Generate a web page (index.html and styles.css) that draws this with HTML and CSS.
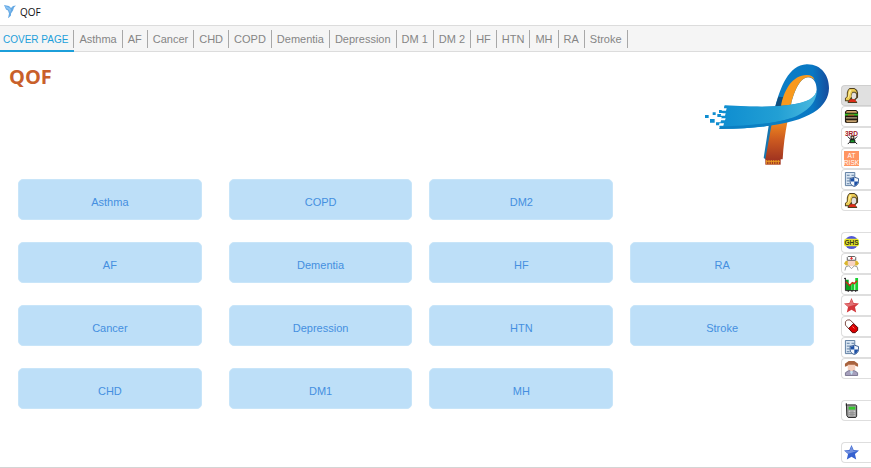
FILE: index.html
```html
<!DOCTYPE html>
<html lang="en">
<head>
    <meta charset="UTF-8">
    <title>QOF</title>
    <meta name="viewport" content="width=device-width, initial-scale=1.0">
    <link rel="stylesheet" href="styles.css">
</head>
<body>
    <!-- shared icons -->
    <svg class="icon-defs" aria-hidden="true">
        <symbol id="icon-patient" viewBox="0 0 16 16">
            <path fill="#4f4020" d="M6 0h5l3 2 1 3v5l-2 2-1 1 2 2v1H4v-2H1v-3l2-2V5l1-3z"/>
            <path fill="#eccb55" d="M6 1h5l2 2 1 3-2-2H9L8 6v3l-2 3-1 1H2v-2l2-2V5l1-3z"/>
            <path fill="#fff0a0" d="M6 2h2L6 7l-1 3-1 1 1-5z"/>
            <path fill="#e4e0dc" d="M9 5h3l1 2v3l-2 2H9L8 9z"/>
            <path fill="#dc2c18" d="M7 12h4l2 2v1H5v-1z"/>
        </symbol>
        <symbol id="icon-record" viewBox="0 0 16 16">
            <path fill="#d9e5f2" stroke="#5b7b9f" d="M1.500 .5h10v14h-10z"/>
            <path stroke="#5b7b9f" d="M3 3.500h3M3 6.500h5M3 9.500h3M3 12.500h3M8 3.500h3"/>
            <path fill="#f4f8fc" stroke="#34588c" d="M11 5.500l4.500 1.500v3c0 3-2 4.500-4.500 5.500-2.500-1-4.500-2.500-4.500-5.500V7z"/>
            <path fill="#1d50a5" d="M11 6v4H7V7.300zM11 10h4c0 2.500-1.500 4-4 5z"/>
        </symbol>
        <symbol id="icon-star" viewBox="0 0 16 16">
            <path d="M8 0l2.300 5.300 5.700.5-4.300 3.900L13 15.500l-5-3-5 3 1.300-5.800L0 5.800l5.700-.5z"/>
            <path fill="#fff" opacity=".3" d="M8 1l2 5 4 .4L2 10l2.500-1L1 6.400 6 6z"/>
        </symbol>
    </svg>

    <header class="title-bar">
        <svg class="app-icon" viewBox="0 0 12 13" aria-hidden="true">
            <path fill="#65a9e4" d="M0 0l5 1 2 2 2-2 3-.5-2 2-1 3-2 3v2l-3 3 1-5-1-3-2-1z"/>
            <path fill="#8cc4f4" d="M1 1l5 2 1 2-1 3-1-3-3-2z"/>
        </svg>
        <span>QOF</span>
    </header>

    <nav class="tabs">
        <a class="tab active" href="#cover">COVER PAGE</a>
        <a class="tab" href="#asthma">Asthma</a>
        <a class="tab" href="#af">AF</a>
        <a class="tab" href="#cancer">Cancer</a>
        <a class="tab" href="#chd">CHD</a>
        <a class="tab" href="#copd">COPD</a>
        <a class="tab" href="#dementia">Dementia</a>
        <a class="tab" href="#depression">Depression</a>
        <a class="tab" href="#dm1">DM 1</a>
        <a class="tab" href="#dm2">DM 2</a>
        <a class="tab" href="#hf">HF</a>
        <a class="tab" href="#htn">HTN</a>
        <a class="tab" href="#mh">MH</a>
        <a class="tab" href="#ra">RA</a>
        <a class="tab" href="#stroke">Stroke</a>
    </nav>

    <div class="page">
        <main class="cover" id="cover">
            <div class="cover-header">
                <h1>QOF</h1>
                <svg class="logo" viewBox="30 20 402 318" aria-hidden="true">
                    <defs>
                        <linearGradient id="loop" x1="0" y1="0" x2="1" y2="0">
                            <stop offset="0" stop-color="#1696d6"/>
                            <stop offset=".5" stop-color="#0c7fc6"/>
                            <stop offset=".85" stop-color="#0878c4"/>
                            <stop offset="1" stop-color="#174b9c"/>
                        </linearGradient>
                        <linearGradient id="arm" x1="0" y1="0" x2="1" y2="0">
                            <stop offset="0" stop-color="#0e8dd0"/>
                            <stop offset=".6" stop-color="#229fd4"/>
                            <stop offset="1" stop-color="#4ab9df"/>
                        </linearGradient>
                        <linearGradient id="leg" x1="0" y1="0" x2="0" y2="1">
                            <stop offset="0" stop-color="#f28c1e"/>
                            <stop offset=".5" stop-color="#cc5a20"/>
                            <stop offset="1" stop-color="#a23520"/>
                        </linearGradient>
                    </defs>
                    <path fill="#1775ae" d="M237 205h24l-32 108-8-5z"/>
                    <path fill="url(#leg)" d="M246 200l47-5c-8 40-13 78-15 117h-52z"/>
                    <path fill="#a23520" d="M226 311h46v17h-46z"/>
                    <path stroke="#e89a24" stroke-width="3" d="M230 314v13M237 314v13M244 314v13M251 314v13M258 314v13M265 314v13M228 318h42"/>
                    <path fill="url(#loop)" fill-rule="evenodd" d="M256 153C272 95 295 30 350 27c45-1 67 35 67 72-2 70-85 120-329 122l16-71c70 4 110 5 152 3zM303 148c48-6 76-20 77-45 0-22-10-36-26-37-24 1-42 42-51 82z"/>
                    <path fill="#124e7d" d="M256 153l9-29 17 2-7 27z"/>
                    <path fill="#f8991d" d="M273 151c9-48 35-92 77-92 13 0 21 5 24 15-7-7-13-9-20-8-24 1-42 42-51 82z"/>
                    <path fill="url(#arm)" d="M104 151c90 5 158 5 205-4 40-6 67-19 71-42 2 43-44 79-105 91-53 12-124 18-187 19z"/>
                    <path fill="#0b7fc2" d="M90 214c98-3 170-11 218-27-48 24-100 33-220 34z"/>
                    <g fill="#0e8dd0">
                        <path d="M45 179h11v9H45zM68 171h9v8h-9zM60 191h14v11H60zM82 176h14v9H82zM78 201h14v9H78zM87 164h15v9H87zM94 187h14v9H94z"/>
                    </g>
                    <g fill="#fff">
                        <path d="M97 159h13l-2 7H95zM94 174h13l-2 7H92zM91 189h16l-2 6H89zM88 204h14l-2 7H87z"/>
                    </g>
                </svg>
            </div>

            <div class="button-grid">
                <button class="condition">Asthma</button>
                <button class="condition">AF</button>
                <button class="condition">Cancer</button>
                <button class="condition">CHD</button>
                <button class="condition">COPD</button>
                <button class="condition">Dementia</button>
                <button class="condition">Depression</button>
                <button class="condition">DM1</button>
                <button class="condition">DM2</button>
                <button class="condition">HF</button>
                <button class="condition">HTN</button>
                <button class="condition">MH</button>
                <button class="condition second-row">RA</button>
                <button class="condition third-row">Stroke</button>
            </div>
        </main>

        <aside class="side-bar">
            <button class="side-btn active" aria-label="Patient"><svg><use href="#icon-patient"/></svg></button>
            <button class="side-btn" aria-label="Diet">
                <svg viewBox="0 0 16 16">
                    <path fill="#21180e" d="M3 1h10l2 2v11l-2 1H3l-2-1V3z"/>
                    <path fill="#d0a66c" d="M3 2h10l1 2H2z"/>
                    <path fill="#2fc024" d="M1 5h14v2H1z"/>
                    <path fill="#dd382c" d="M4 6h7v1H4z"/>
                    <path fill="#ead9b2" d="M2 9h12v1H2z"/>
                    <path fill="#c8a470" d="M2 12h12l-1 2H3z"/>
                </svg>
            </button>
            <button class="side-btn" aria-label="Third party">
                <svg viewBox="0 0 16 16">
                    <path stroke="#181818" fill="none" d="M4 7l3 3h4l3-3M7 12l-3 3M11 12l3 3"/>
                    <path fill="#111" d="M7 6h4v4H7z"/>
                    <path fill="#f3d9bd" d="M8 7h2v2H8z"/>
                    <path fill="#199c2b" stroke="#111" d="M6.500 10.500h5v3h-5z"/>
                    <text class="third-text" x="8" y="6">3RD</text>
                </svg>
            </button>
            <button class="side-btn" aria-label="At risk">
                <svg viewBox="0 0 16 16">
                    <path fill="#ff9561" d="M0 0h16v16H0z"/>
                    <text class="risk-text" x="8" y="7">AT</text>
                    <text class="risk-text" x="8" y="15">RISK</text>
                </svg>
            </button>
            <button class="side-btn" aria-label="Protected record"><svg><use href="#icon-record"/></svg></button>
            <button class="side-btn" aria-label="Patient details"><svg><use href="#icon-patient"/></svg></button>

            <button class="side-btn new-group" aria-label="GHS">
                <svg viewBox="0 0 16 16">
                    <circle cx="8" cy="8" r="7" fill="#5057d8"/>
                    <path fill="#e6e62a" d="M1 4h14l1 2v4l-1 2H1l-1-2V6z"/>
                    <text class="ghs-text" x="8" y="11">GHS</text>
                </svg>
            </button>
            <button class="side-btn" aria-label="Nurse">
                <svg viewBox="0 0 16 16">
                    <path fill="#d9b62e" d="M2 5h12l2 3-2 2H2L0 8z"/>
                    <path fill="#f8d3c4" d="M4 4h8v5l-3 2H7L4 9z"/>
                    <path fill="#fff" stroke="#555" d="M3.500 1.500l1-1h7l1 1v3h-9z"/>
                    <path stroke="#e52e2e" d="M8 1v3M6.500 2.500h3"/>
                    <path fill="#fff" stroke="#999" d="M1 15.500l1-4 3-1 3 3 3-3 3 1 1 4"/>
                </svg>
            </button>
            <button class="side-btn" aria-label="Chart">
                <svg viewBox="0 0 16 16">
                    <path fill="#0c9f20" d="M2 3h3v11H2zM5 8h3v6H5z"/>
                    <path fill="#18cf30" d="M8 6h3v8H8zM12 1h3v13h-3z"/>
                    <path stroke="#222" fill="none" d="M0 1.500h2M1.500 1v13.500H15M4.500 14v2M8.500 14v2M12.500 14v2"/>
                    <path stroke="#cf2a18" fill="none" stroke-width="1.500" d="M2 5l4 4 3-3 2 1 3-3"/>
                </svg>
            </button>
            <button class="side-btn" aria-label="Red star"><svg class="red-star"><use href="#icon-star"/></svg></button>
            <button class="side-btn" aria-label="Medication">
                <svg viewBox="0 0 16 16">
                    <path fill="#fff" stroke="#77443e" d="M1.500 3l2-2h3l8 8v3l-2.500 2.500H9L1.500 6.500z"/>
                    <path fill="#dc0000" stroke="#5e0e0e" d="M10 5l4.500 4v3L12 14.500H9L5 10z"/>
                    <path stroke="#ff8b80" d="M9 8l2 2"/>
                </svg>
            </button>
            <button class="side-btn" aria-label="Record audit"><svg><use href="#icon-record"/></svg></button>
            <button class="side-btn" aria-label="Carer">
                <svg viewBox="0 0 16 16">
                    <path fill="#a8623d" d="M5 0h6l4 3v3l-3-1H4L1 6V3z"/>
                    <path fill="#f5cfbd" d="M4 4h8v5l-2 2H6L4 9z"/>
                    <path fill="#a6a0bd" stroke="#77738f" d="M1.500 15.500v-3l3-2h2l1.500 2 1.500-2h2l3 2v3z"/>
                    <path fill="#c7e4f4" d="M6 11h4l-2 4z"/>
                </svg>
            </button>

            <button class="side-btn new-group" aria-label="Phone">
                <svg viewBox="0 0 16 16">
                    <path fill="#999" stroke="#222" d="M2.500.5V3l1-1h9l1 1v11l-1 1.500h-8l-1.500-2z"/>
                    <path fill="#35c92d" d="M5 4h7v3H5z"/>
                    <path fill="#ccc" d="M5 8h7v6H5z"/>
                    <path stroke="#888" d="M5 10.500h7M5 12.500h7M7.500 8v6M9.500 8v6"/>
                </svg>
            </button>

            <button class="side-btn new-group" aria-label="Blue star"><svg class="blue-star"><use href="#icon-star"/></svg></button>
        </aside>
    </div>
</body>
</html>
```
FILE: styles.css
```css
* {
    box-sizing: border-box;
}
body {
    display: flex;
    flex-direction: column;
    min-height: 100vh;
    margin: 0;
    background: #fff;
    font-family: "Liberation Sans", Arial, sans-serif;
    font-size: 11px;
}
.icon-defs {
    display: none;
}
.title-bar {
    display: flex;
    align-items: center;
    gap: 4px;
    height: 25px;
    padding: 0 4px 2px;
    color: #111;
    font-family: "Open Sans", sans-serif;
    font-size: 10px;
}
.app-icon {
    width: 12px;
    height: 13px;
}
.tabs {
    display: flex;
    align-items: center;
    height: 27px;
    background: #f5f5f5;
    border-top: 1px solid #dcdcdc;
    border-bottom: 1px solid #dcdcdc;
}
.tab {
    padding: 1px 5px 0;
    border-right: 1px solid #a8a8a8;
    color: #858585;
    line-height: 17px;
    text-decoration: none;
    white-space: nowrap;
}
.tab.active {
    position: relative;
    padding-left: 3px;
    color: #1c9fda;
    font-size: 10px;
}
.tab.active::after {
    content: "";
    position: absolute;
    left: 0;
    right: -1px;
    bottom: -4px;
    height: 2px;
    background: #1c9fda;
}
.page {
    display: flex;
    flex: 1;
    border-bottom: 1px solid #d4d4d4;
}
.cover {
    flex: 1;
    padding: 10px 27px 20px 18px;
}
.cover-header {
    display: flex;
    justify-content: space-between;
    height: 117px;
    margin: 0 -20px 0 -9px;
}
h1 {
    margin: 0;
    color: #c9602a;
    font-family: "Open Sans", sans-serif;
    font-size: 20px;
    line-height: 30px;
}
.logo {
    width: 134px;
    height: 106px;
}
.button-grid {
    display: grid;
    grid-template-columns: 194fr 184fr 184fr 184fr;
    grid-template-rows: repeat(4, 41px);
    grid-auto-flow: column;
    gap: 22px 17px;
}
.condition {
    padding: 4px 0 0;
    background: #bddff8;
    border: 1px solid #c8e5f9;
    border-radius: 5px;
    color: #458fe0;
    font-family: inherit;
    font-size: 11px;
    cursor: pointer;
}
/* wider gutter after the first column */
.condition:nth-child(-n+4) {
    margin-right: 10px;
}
.second-row {
    grid-row: 2;
    grid-column: 4;
}
.third-row {
    grid-row: 3;
    grid-column: 4;
}
.condition:hover {
    background: #acd6f5;
}
.side-bar {
    width: 30px;
    padding-top: 33px;
}
.side-btn {
    display: flex;
    align-items: center;
    width: 100%;
    height: 21px;
    padding: 0 0 0 2px;
    background: #fff;
    border: 1px solid #dedede;
    border-right: none;
    border-radius: 4px 0 0 4px;
}
.side-btn.active {
    background: #e0e0e0;
    border-color: #cfcfcf;
}
.side-btn.new-group {
    margin-top: 21px;
}
.side-btn svg {
    width: 15px;
    height: 15px;
}
.red-star {
    fill: #d3373b;
}
.blue-star {
    fill: #3561d0;
}
.third-text {
    fill: #a32025;
    font-size: 7px;
    font-weight: bold;
    text-anchor: middle;
}
.risk-text {
    fill: #fff;
    font-size: 7px;
    text-anchor: middle;
}
.ghs-text {
    fill: #36391d;
    font-size: 7px;
    font-weight: bold;
    text-anchor: middle;
}
```
